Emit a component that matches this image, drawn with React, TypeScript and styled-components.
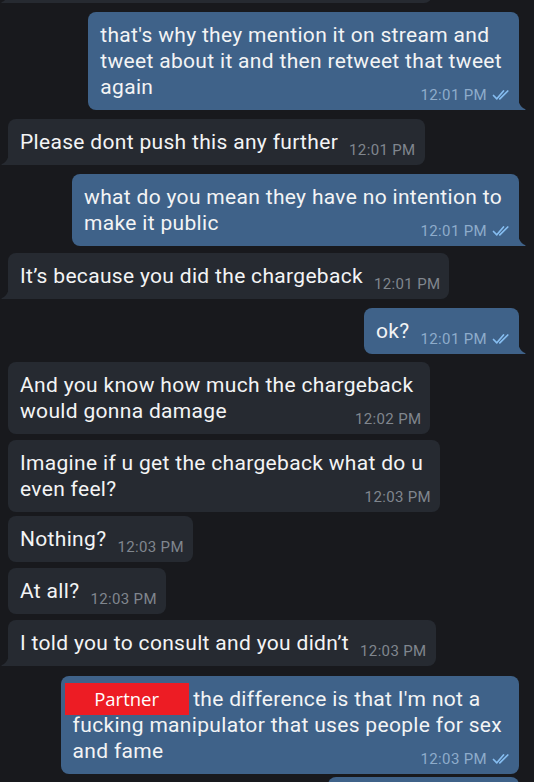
import React from 'react';
import styled, { createGlobalStyle, css } from 'styled-components';

type Side = 'in' | 'out';

const Global = createGlobalStyle`
  html, body { margin: 0; padding: 0; background: #18191d; }
  body { font-family: Roboto, "Noto Sans", sans-serif; -webkit-font-smoothing: antialiased; }
`;

const Screen = styled.div`
  width: 534px;
  height: 782px;
  overflow: hidden;
  box-sizing: border-box;
  padding: 0 15px 0 8px;
  background: #18191d;
  display: flex;
  flex-direction: column;
`;

const Row = styled.div<{ $side: Side; $gap: number }>`
  display: flex;
  flex-shrink: 0;
  justify-content: ${(p) => (p.$side === 'out' ? 'flex-end' : 'flex-start')};
  margin-top: ${(p) => p.$gap}px;
`;

const Bubble = styled.div<{ $side: Side; $tail: boolean }>`
  position: relative;
  display: flow-root;
  box-sizing: border-box;
  padding: 10px 17px 7px 12px;
  border-radius: 8px;
  background: ${(p) => (p.$side === 'out' ? '#3f6289' : '#262a31')};
  color: #f3f4f5;
  font-size: 21px;
  letter-spacing: 0.32px;
  line-height: 26px;
  white-space: nowrap;
  ${(p) =>
    p.$tail &&
    (p.$side === 'out'
      ? css`border-bottom-right-radius: 0;`
      : css`border-bottom-left-radius: 0;`)}
`;

const Stub = styled(Bubble)<{ $w: number; $h: number; $lift: number }>`
  width: ${(p) => p.$w}px;
  height: ${(p) => p.$h}px;
  margin-top: -${(p) => p.$lift}px;
`;

const Meta = styled.span<{ $side: Side }>`
  float: right;
  display: inline-flex;
  align-items: center;
  gap: 5px;
  height: 16px;
  margin: 13px -8px 0 11px;
  font-size: 15px;
  letter-spacing: 0.35px;
  line-height: 16px;
  color: ${(p) => (p.$side === 'out' ? '#8eaccb' : '#80868e')};
`;

const Tail = styled.svg<{ $side: Side }>`
  position: absolute;
  bottom: 0;
  width: 8px;
  height: 13px;
  fill: ${(p) => (p.$side === 'out' ? '#3f6289' : '#262a31')};
  ${(p) =>
    p.$side === 'out'
      ? css`right: -7px;`
      : css`left: -7px; transform: scaleX(-1);`}
`;

const Checks = styled.svg`
  width: 18px;
  height: 12px;
  fill: none;
  stroke: #86bdf0;
  stroke-width: 1.7;
  stroke-linecap: round;
  stroke-linejoin: round;
`;

const Redaction = styled.span`
  display: inline-block;
  vertical-align: top;
  width: 124px;
  height: 32px;
  margin: -3px -1px -5px -8px;
  background: #ed1c24;
  color: #ffffff;
  font-family: "Open Sans", "Noto Sans", sans-serif;
  font-size: 18.5px;
  letter-spacing: 0;
  line-height: 32px;
  text-align: center;
`;

type Msg = {
  side: Side;
  gap: number;
  tail: boolean;
  lines: string[];
  time: string;
  redacted?: string;
};

const messages: Msg[] = [
  {
    side: 'out',
    gap: 9,
    tail: true,
    lines: [
      "that's why they mention it on stream and",
      'tweet about it and then retweet that tweet',
      'again',
    ],
    time: '12:01 PM',
  },
  { side: 'in', gap: 9, tail: true, lines: ['Please dont push this any further'], time: '12:01 PM' },
  {
    side: 'out',
    gap: 9,
    tail: true,
    lines: ['what do you mean they have no intention to', 'make it public'],
    time: '12:01 PM',
  },
  { side: 'in', gap: 7, tail: true, lines: ['It\u2019s because you did the chargeback'], time: '12:01 PM' },
  { side: 'out', gap: 9, tail: true, lines: ['ok?'], time: '12:01 PM' },
  {
    side: 'in',
    gap: 8,
    tail: false,
    lines: ['And you know how much the chargeback', 'would gonna damage'],
    time: '12:02 PM',
  },
  {
    side: 'in',
    gap: 6,
    tail: false,
    lines: ['Imagine if u get the chargeback what do u', 'even feel?'],
    time: '12:03 PM',
  },
  { side: 'in', gap: 4, tail: false, lines: ['Nothing?'], time: '12:03 PM' },
  { side: 'in', gap: 6, tail: false, lines: ['At all?'], time: '12:03 PM' },
  { side: 'in', gap: 6, tail: true, lines: ['I told you to consult and you didn\u2019t'], time: '12:03 PM' },
  {
    side: 'out',
    gap: 10,
    tail: false,
    redacted: 'Partner',
    lines: [
      "the difference is that I'm not a",
      'fucking manipulator that uses people for sex',
      'and fame',
    ],
    time: '12:03 PM',
  },
];

const TailShape = ({ side }: { side: Side }) => (
  <Tail $side={side} viewBox="0 0 8 13" aria-hidden>
    <path d="M0 0 C0.3 6 2.6 10 7 12.1 C7.9 12.5 7.7 13 7 13 H0 Z" />
  </Tail>
);

const DoubleCheck = () => (
  <Checks viewBox="0 0 18 12" aria-hidden>
    <polyline points="1.5,6.5 4.8,9.8 11.5,2" />
    <polyline points="7.8,9.8 15.8,2" />
  </Checks>
);

const Message = ({ m }: { m: Msg }) => (
  <Row $side={m.side} $gap={m.gap}>
    <Bubble $side={m.side} $tail={m.tail}>
      {m.redacted && (
        <>
          <Redaction>{m.redacted}</Redaction>{' '}
        </>
      )}
      {m.lines.map((l, i) => (
        <React.Fragment key={i}>
          {i > 0 && <br />}
          {l}
        </React.Fragment>
      ))}
      <Meta $side={m.side}>
        {m.time}
        {m.side === 'out' && <DoubleCheck />}
      </Meta>
      {m.tail && <TailShape side={m.side} />}
    </Bubble>
  </Row>
);

export default function App() {
  return (
    <>
      <Global />
      <Screen>
        <Row $side="in" $gap={0}>
          <Stub $side="in" $tail={true} $w={424} $h={43} $lift={40}>
            <TailShape side="in" />
          </Stub>
        </Row>
        {messages.map((m, i) => (
          <Message key={i} m={m} />
        ))}
        <Row $side="out" $gap={3}>
          <Stub $side="out" $tail={false} $w={191} $h={45} $lift={0} />
        </Row>
      </Screen>
    </>
  );
}
